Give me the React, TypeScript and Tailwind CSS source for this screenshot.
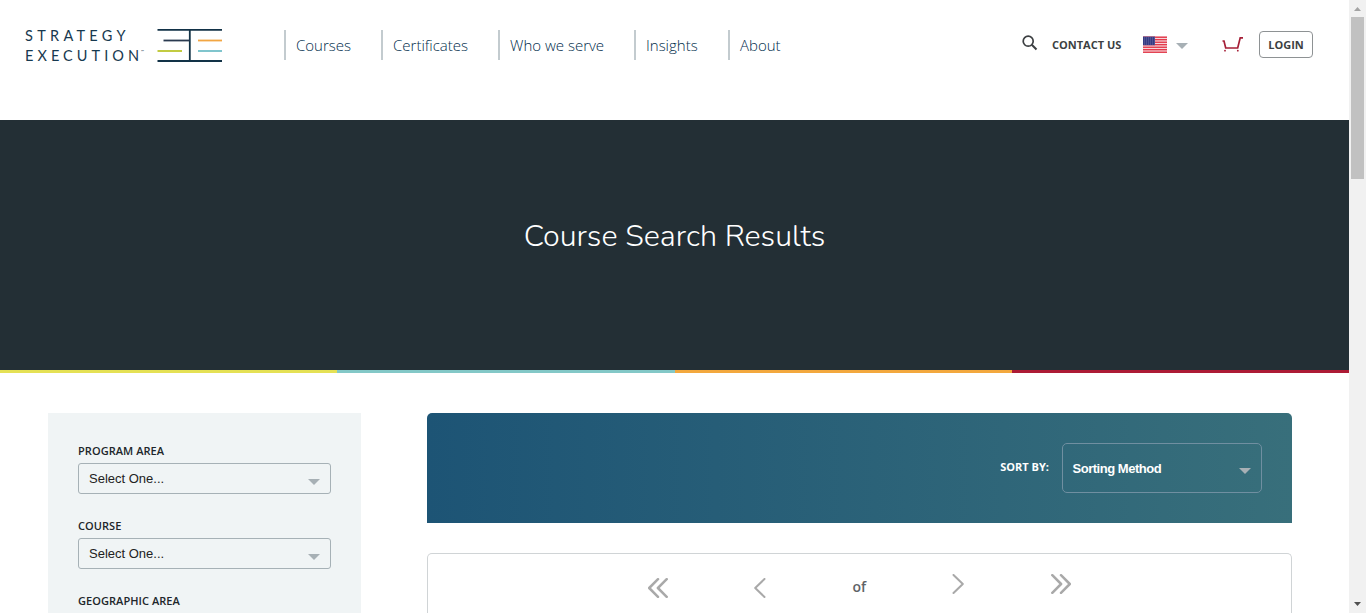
import React from "react";

const navItems = [
  { label: "Courses", width: "w-[97px]" },
  { label: "Certificates", width: "w-[117px]" },
  { label: "Who we serve", width: "w-[136px]" },
  { label: "Insights", width: "w-[94px]" },
  { label: "About", width: "w-[80px]" },
];

const filters = ["PROGRAM AREA", "COURSE", "GEOGRAPHIC AREA"];

function Caret({ className = "" }: { className?: string }) {
  return (
    <svg width="12" height="6" viewBox="0 0 12 6" className={`shrink-0 ${className}`}>
      <path d="M0 0h12L6 6z" fill="#a7b0b5" />
    </svg>
  );
}

function Chevron({ double = false, right = false }: { double?: boolean; right?: boolean }) {
  return (
    <svg
      width={double ? 20 : 12}
      height="20"
      viewBox={double ? "0 0 20 20" : "0 0 12 20"}
      fill="none"
      stroke="#a9a9a9"
      strokeWidth={double ? 2.5 : 2}
      strokeLinecap="round"
      strokeLinejoin="round"
      className={`shrink-0 ${right ? "-scale-x-100" : ""}`}
    >
      <path d={double ? "M10 1.2 1.2 10 10 18.8M18.7 1.2 9.9 10l8.8 8.8" : "M10.5 1 1.2 10l9.3 9"} />
    </svg>
  );
}

function Logo() {
  return (
    <div className="flex w-[284px] shrink-0 pl-[25px] pt-[25px]">
      <div className="w-[132px] whitespace-nowrap font-['Lato',sans-serif] text-[14.5px] leading-5 text-[#17394f]">
        <div className="h-5 leading-[21px] tracking-[4.3px]">STRATEGY</div>
        <div className="flex">
          <span className="leading-[21px] tracking-[4.05px]">EXECUTION</span>
          <span className="-ml-[2px] -mt-[3px] text-[4px]">™</span>
        </div>
      </div>
      <svg width="66" height="34" viewBox="0 0 66 34" fill="none" strokeWidth="1.8" className="mt-[3px]">
        <path d="M.5 1.8H65M.5 33H65M32.800 1.8V33" stroke="#123247" />
        <path d="M6.500 12.500h26" stroke="#2a3a50" />
        <path d="M.5 23h24.500" stroke="#bcc62c" />
        <path d="M41 12.500h24" stroke="#f2a643" />
        <path d="M41 23h24" stroke="#72bfc8" />
      </svg>
    </div>
  );
}

function Flag() {
  return (
    <svg width="24" height="17" viewBox="0 0 24 17" className="shrink-0">
      <rect width="24" height="17" fill="#f7d5da" />
      {[0.6, 3.1, 5.6, 8.1, 10.6, 13.1, 15.6].map((y) => (
        <rect key={y} y={y} width="24" height="1.25" fill="#e02b3c" />
      ))}
      <rect y=".6" width="12" height="8.6" fill="#363b83" />
      {[2, 4, 6, 8].map((y) => (
        <path key={y} d={`M1 ${y}H12`} stroke="#9194c0" strokeWidth=".7" strokeDasharray=".8 1.200" />
      ))}
    </svg>
  );
}

function Header() {
  return (
    <header className="flex h-[120px] shrink-0">
      <Logo />
      <nav className="flex pt-[30px]">
        {navItems.map(({ label, width }) => (
          <div
            key={label}
            className={`h-[30px] border-l-2 border-[#c3cbcf] pl-[10px] text-[15px] font-light leading-[30px] whitespace-nowrap text-[#002c4b] ${width}`}
          >
            {label}
          </div>
        ))}
      </nav>
      <div className="ml-auto flex pr-9 pt-[31px] text-[11px] font-bold text-[#3c3f42]">
        <svg width="16" height="16" viewBox="0 0 16 16" fill="none" stroke="#3c3f42" strokeWidth="1.7" className="mt-[4px]">
          <circle cx="6.200" cy="6.200" r="5" />
          <path d="m9.800 9.800 4.700 4.700" strokeWidth="2" />
        </svg>
        <span className="ml-[14px] w-[91px] leading-7 whitespace-nowrap">CONTACT US</span>
        <div className="mt-[5px]"><Flag /></div>
        <Caret className="ml-[9px] mt-[12px]" />
        <svg width="22" height="16" viewBox="0 0 22 16" fill="none" stroke="#a51e36" strokeWidth="1.700" className="ml-[34px] mt-[5px]">
          <path d="M.5 5h1.500l1.700 7h12L18.200 1.800H21" />
          <circle cx="3" cy="14.700" r=".9" fill="#a51e36" stroke="none" />
          <circle cx="15.800" cy="14.700" r=".9" fill="#a51e36" stroke="none" />
        </svg>
        <button className="ml-[15px] h-[27px] w-[54px] rounded-[4px] border border-[#8e9294] leading-[25px]">LOGIN</button>
      </div>
    </header>
  );
}

function Filters() {
  return (
    <aside className="h-[200px] w-[313px] shrink-0 overflow-hidden bg-[#f0f4f5] px-[30px] pt-[30px]">
      {filters.map((label) => (
        <div key={label} className="h-[75px]">
          <div className="h-5 text-[11px] font-[550] leading-4 tracking-[0.06px] text-[#20262a]">{label}</div>
          <div className="flex h-[31px] w-[253px] items-center justify-between rounded-[3px] border border-[#a6b1b6] pl-[10px] pr-[10px] font-['Liberation_Sans',Arial,sans-serif] text-[13px] text-[#222]">
            <span>Select One...</span>
            <Caret className="mt-[7px]" />
          </div>
        </div>
      ))}
    </aside>
  );
}

function Results() {
  return (
    <section className="ml-[66px] w-[865px]">
      <div className="flex h-[110px] justify-end rounded-t-[5px] bg-linear-to-r/srgb from-[#1d5475] to-[#386f7b] pr-[30px] pt-[30px] text-white">
        <span className="mr-[13px] text-[11px] font-bold leading-[47px]">SORT BY:</span>
        <div className="flex h-[50px] w-[200px] items-center justify-between rounded-[5px] border border-[#708fa1] pl-[9.5px] pr-[10px] font-['Liberation_Sans',Arial,sans-serif] text-[13px] font-bold">
          <span className="pt-[2px] tracking-[-0.47px]">Sorting Method</span>
          <Caret className="mt-[5px]" />
        </div>
      </div>
      <div className="mt-[30px] flex h-[60px] rounded-t-[5px] border border-b-0 border-[#d0d4d6] pl-[220px] pt-[20px]">
        <div className="mt-[4px] w-[106px]"><Chevron double /></div>
        <div className="mt-[4px] w-[98px]"><Chevron /></div>
        <span className="mt-[3px] w-[100px] pl-[0.5px] text-sm font-semibold leading-5 text-[#606366]">of</span>
        <div className="w-[99px]"><Chevron right /></div>
        <Chevron double right />
      </div>
    </section>
  );
}

export default function App() {
  return (
    <div className="flex h-[613px] w-[1366px] overflow-hidden bg-white font-['Open_Sans',sans-serif]">
      <main className="w-[1349px] shrink-0">
        <Header />
        <div className="flex h-[250px] items-center justify-center bg-[#232f35] pb-[18px]">
          <h1 className="font-['Nunito','Muli','Lato',sans-serif] text-[30.5px] font-light leading-10 text-white">Course Search Results</h1>
        </div>
        <div className="grid h-[3px] grid-cols-4">
          <div className="bg-[#e5e155]" />
          <div className="bg-[#83c8c7]" />
          <div className="bg-[#f3a83e]" />
          <div className="bg-[#ad1b35]" />
        </div>
        <div className="flex pl-12 pt-10">
          <Filters />
          <Results />
        </div>
      </main>
      <div className="flex w-[17px] shrink-0 flex-col items-center bg-[#f1f1f1]">
        <svg width="17" height="17" viewBox="0 0 17 17"><path d="M5 11h7L8.500 7z" fill="#a3a3a3" /></svg>
        <div className="h-[162px] w-[13px] bg-[#c1c1c1]" />
        <svg width="17" height="17" viewBox="0 0 17 17" className="mt-auto"><path d="M5 6h7L8.500 10z" fill="#505050" /></svg>
      </div>
    </div>
  );
}
